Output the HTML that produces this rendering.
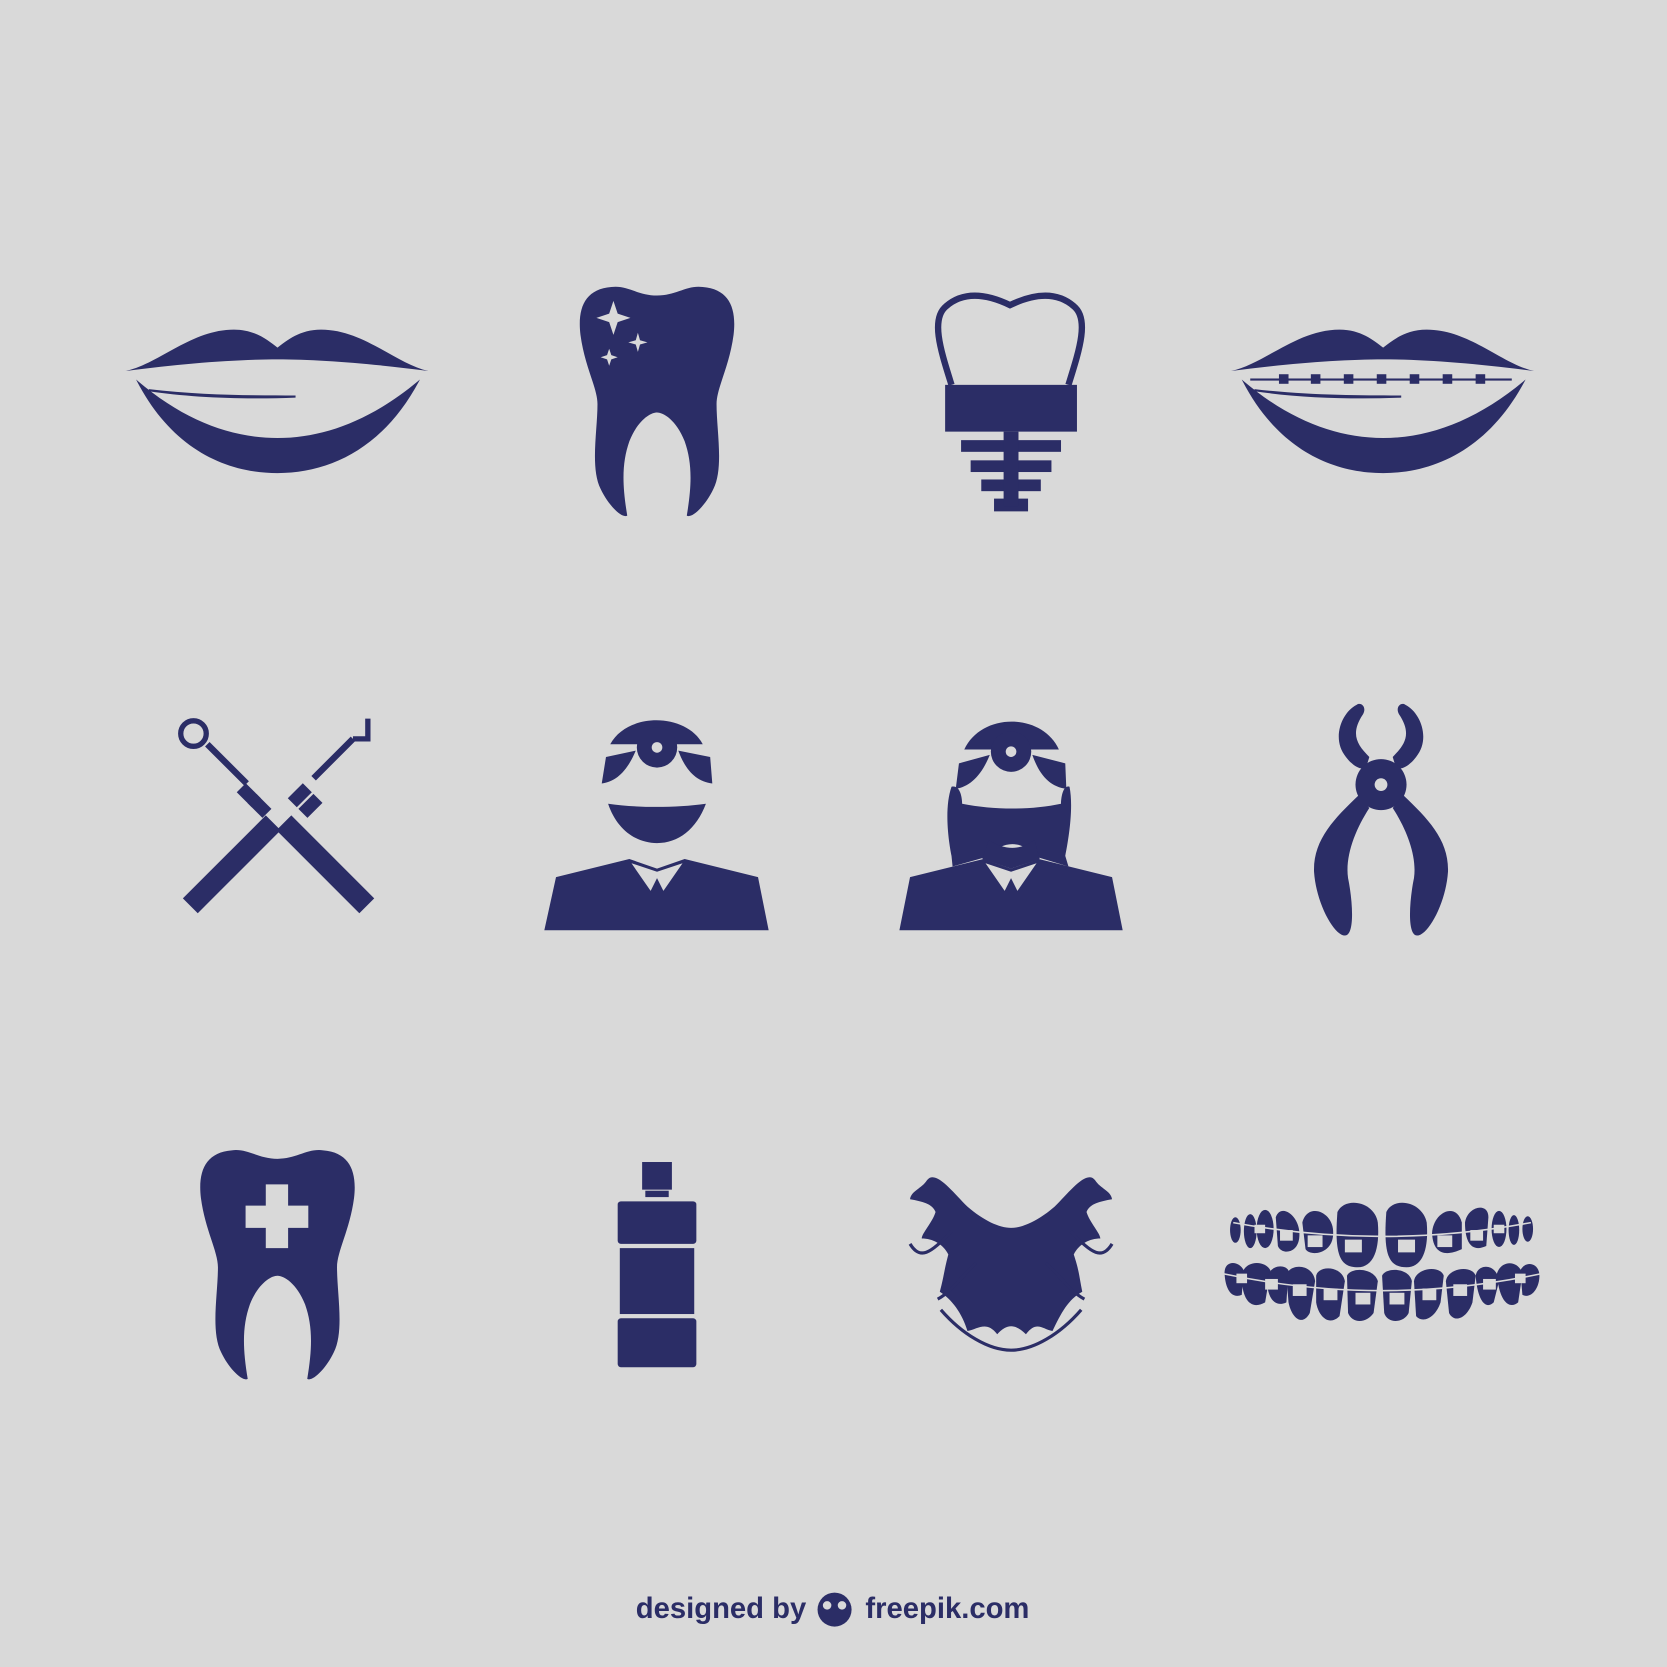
<!DOCTYPE html>
<html><head><meta charset="utf-8"><style>
html,body{margin:0;padding:0;background:#d9d9d9;}
svg{display:block;width:1667px;height:1667px;}
</style></head><body>
<svg viewBox="0 0 1568 1568" xmlns="http://www.w3.org/2000/svg">
<rect width="1568" height="1568" fill="#d9d9d9"/>
<defs>
<g id="lips">
<path d="M118 349 C150 342 180 310 220 310 C240 310 252 320 261 327 C270 320 282 310 302 310 C342 310 372 342 403 349 C350 342 300 338 261 338 C222 338 170 342 118 349Z"/>
<path d="M128 357 C160 420 210 445 261 445 C312 445 362 420 395 357 C350 395 305 412 261 412 C217 412 172 395 128 357Z"/>
<path d="M140 366 C190 372 240 372 278 372 L278 374 C230 376 180 374 140 368Z"/>
</g>
<path id="tooth" d="M618 278 C600 278 590 268 575 270 C550 272 543 290 546 315 C550 345 562 365 562 380 C562 405 555 440 565 460 C572 475 585 488 590 485 C585 455 585 435 592 415 C600 395 612 388 618 388 C624 388 636 395 644 415 C651 435 651 455 646 485 C651 488 664 475 671 460 C681 440 674 405 674 380 C674 365 686 345 690 315 C693 290 686 272 661 270 C646 268 636 278 618 278Z"/>
</defs>
<g fill="#2b2d66">
<use href="#lips"/>
<use href="#tooth"/>
<g fill="#d9d9d9">
<path d="M577 283 L581 295 L593 299 L581 303 L577 315 L573 303 L561 299 L573 295Z"/>
<path d="M600 313 L602 320 L609 322 L602 324 L600 331 L598 324 L591 322 L598 320Z"/>
<path d="M573 328 L575 334 L581 336 L575 338 L573 344 L571 338 L565 336 L571 334Z"/>
</g>
<path d="M895 362 C885 330 875 300 890 288 C905 275 925 275 950 287 C975 275 995 275 1010 288 C1025 300 1015 330 1005 362" fill="none" stroke="#2b2d66" stroke-width="6"/>
<rect x="889" y="362" width="124" height="44"/>
<rect x="904" y="414" width="94" height="11"/>
<rect x="913" y="433" width="76" height="11"/>
<rect x="923" y="451" width="56" height="11"/>
<rect x="935" y="469" width="32" height="12"/>
<rect x="944" y="406" width="14" height="70"/>
<use href="#lips" transform="translate(1040,0)"/>
<rect x="1176" y="356" width="246" height="2"/>
<g><rect x="1203" y="352" width="9" height="9"/><rect x="1233" y="352" width="9" height="9"/><rect x="1264" y="352" width="9" height="9"/><rect x="1295" y="352" width="9" height="9"/><rect x="1326" y="352" width="9" height="9"/><rect x="1357" y="352" width="9" height="9"/><rect x="1388" y="352" width="9" height="9"/></g>
<path d="M172 845 L250 767 L264 781 L186 859Z"/>
<path d="M352 845 L274 767 L260 781 L338 859Z"/>
<rect x="228" y="738" width="12" height="20" transform="rotate(-45 234 748)"/>
<rect x="238" y="748" width="12" height="20" transform="rotate(-45 244 758)"/>
<rect x="276" y="738" width="12" height="20" transform="rotate(45 282 748)"/>
<rect x="286" y="748" width="12" height="20" transform="rotate(45 292 758)"/>
<path d="M195 700 L232 737 M332 695 L295 732" stroke="#2b2d66" stroke-width="6"/>
<circle cx="182" cy="690" r="12" fill="none" stroke="#2b2d66" stroke-width="5"/>
<path d="M332 695 L346 695 L346 676" fill="none" stroke="#2b2d66" stroke-width="5"/>
<path d="M574 700 C590 670 645 670 661 700 Z"/>
<circle cx="618" cy="703" r="19"/><circle cx="618" cy="703" r="5" fill="#d9d9d9"/>
<path d="M570 712 L598 706 C590 725 580 735 566 737Z M638 706 L668 712 L670 737 C655 735 645 725 638 706Z"/>
<path d="M572 756 C600 760 635 760 664 756 C655 780 638 793 618 793 C598 793 580 780 572 756Z"/>
<path d="M523 825 L592 808 L618 817 L644 808 L713 825 L723 875 L512 875Z"/>
<path d="M594 812 L612 838 L618 826 L624 838 L642 812 L618 820Z" fill="#d9d9d9"/>
<path d="M907 705 C923 670 980 670 996 705 Z"/>
<circle cx="951" cy="707" r="19"/><circle cx="951" cy="707" r="5" fill="#d9d9d9"/>
<path d="M902 718 L931 710 C923 730 912 740 899 742Z M971 710 L1002 718 L1003 742 C988 740 978 730 971 710Z"/>
<path d="M895 740 C903 738 905 750 905 756 C935 762 970 762 998 756 C998 750 1000 738 1006 740 C1010 760 1005 790 1002 805 L1005 815 L975 806 C960 790 945 790 928 806 L896 815 L895 805 C892 790 888 760 895 740Z"/>
<path d="M930 790 C945 800 960 800 973 790 L978 808 L951 817 L924 808Z"/>
<path d="M856 825 L925 808 L951 817 L977 808 L1046 825 L1056 875 L846 875Z"/>
<path d="M927 812 L945 838 L951 826 L957 838 L975 812 L951 820Z" fill="#d9d9d9"/>
<path d="M1276 663 C1262 670 1252 695 1266 712 C1272 720 1280 725 1285 722 L1288 712 C1276 700 1270 690 1282 672 C1286 665 1280 660 1276 663Z"/>
<path d="M1322 663 C1336 670 1346 695 1332 712 C1326 720 1318 725 1313 722 L1310 712 C1322 700 1328 690 1316 672 C1312 665 1318 660 1322 663Z"/>
<circle cx="1299" cy="738" r="24"/><circle cx="1299" cy="738" r="6" fill="#d9d9d9"/>
<path d="M1278 748 C1255 770 1235 790 1236 820 C1238 850 1255 880 1265 880 C1275 880 1272 845 1268 826 C1265 805 1275 780 1288 760Z"/>
<path d="M1320 748 C1343 770 1363 790 1362 820 C1360 850 1343 880 1333 880 C1323 880 1326 845 1330 826 C1333 805 1323 780 1310 760Z"/>
<use href="#tooth" transform="translate(-357,812)"/>
<path d="M250 1114 H271 V1134 H290 V1155 H271 V1174 H250 V1155 H231 V1134 H250Z" fill="#d9d9d9"/>
<rect x="604" y="1093" width="28" height="26"/>
<rect x="607" y="1120" width="22" height="6"/>
<rect x="581" y="1130" width="74" height="40" rx="3"/>
<rect x="583" y="1174" width="70" height="62"/>
<rect x="581" y="1240" width="74" height="46" rx="3"/>
<path d="M872 1110 C880 1100 895 1120 910 1135 C925 1148 940 1155 951 1155 C962 1155 977 1148 992 1135 C1007 1120 1022 1100 1030 1110 C1035 1118 1045 1120 1046 1128 C1035 1130 1025 1132 1022 1140 C1025 1150 1035 1160 1035 1165 C1025 1165 1015 1170 1010 1180 C1015 1195 1015 1200 1018 1215 C1005 1222 998 1235 990 1252 C980 1250 975 1242 965 1255 C955 1245 947 1245 938 1255 C928 1242 920 1250 910 1252 C905 1235 895 1222 884 1215 C888 1200 888 1195 892 1180 C887 1170 877 1165 867 1165 C867 1160 877 1150 880 1140 C877 1132 867 1130 856 1128 C857 1120 867 1118 872 1110Z"/>
<path d="M885 1232 C905 1255 930 1270 951 1270 C972 1270 997 1255 1017 1232" fill="none" stroke="#2b2d66" stroke-width="3"/>
<path d="M856 1170 C865 1185 875 1180 895 1158 M1046 1170 C1037 1185 1027 1180 1007 1158 M882 1222 C895 1215 905 1200 918 1188 M1020 1222 C1007 1215 997 1200 984 1188" fill="none" stroke="#2b2d66" stroke-width="3"/>
<g>
<ellipse cx="1162" cy="1157" rx="5" ry="12"/><ellipse cx="1176" cy="1158" rx="6" ry="16"/><ellipse cx="1190" cy="1156" rx="8" ry="18"/>
<path d="M1200 1145 C1205 1130 1225 1145 1222 1165 C1220 1180 1205 1180 1202 1172Z"/>
<path d="M1225 1150 C1230 1130 1255 1140 1254 1160 C1254 1180 1232 1182 1228 1175Z"/>
<path d="M1258 1140 C1265 1125 1293 1130 1296 1150 C1298 1175 1292 1192 1277 1192 C1260 1192 1255 1180 1258 1140Z"/>
<path d="M1304 1140 C1311 1125 1338 1130 1342 1150 C1344 1175 1338 1192 1323 1192 C1306 1192 1301 1180 1304 1140Z"/>
<path d="M1347 1160 C1348 1140 1370 1130 1375 1150 L1375 1175 C1360 1182 1348 1180 1347 1160Z"/>
<path d="M1378 1150 C1380 1135 1400 1130 1400 1145 L1398 1172 C1385 1178 1378 1170 1378 1150Z"/>
<ellipse cx="1410" cy="1156" rx="7" ry="17"/><ellipse cx="1424" cy="1157" rx="5" ry="14"/><ellipse cx="1437" cy="1156" rx="5" ry="12"/>
<path d="M1152 1200 C1150 1185 1165 1185 1170 1195 L1168 1218 C1158 1222 1153 1212 1152 1200Z"/>
<path d="M1168 1200 C1170 1185 1190 1185 1195 1195 L1190 1225 C1178 1232 1168 1225 1168 1200Z"/>
<path d="M1192 1205 C1192 1190 1208 1188 1212 1195 L1210 1225 C1200 1230 1192 1222 1192 1205Z"/>
<path d="M1210 1200 C1212 1188 1235 1188 1237 1205 L1232 1235 C1225 1248 1215 1240 1212 1225Z"/>
<path d="M1238 1200 C1240 1190 1262 1190 1265 1205 L1260 1238 C1250 1248 1240 1238 1238 1225Z"/>
<path d="M1267 1200 C1270 1192 1292 1192 1296 1205 L1292 1235 C1285 1245 1272 1245 1268 1235Z"/>
<path d="M1300 1200 C1303 1192 1325 1192 1328 1205 L1325 1235 C1320 1245 1305 1245 1302 1235Z"/>
<path d="M1330 1205 C1332 1192 1355 1190 1358 1200 L1355 1225 C1350 1240 1338 1245 1332 1238Z"/>
<path d="M1360 1205 C1362 1192 1385 1190 1388 1200 L1385 1225 C1380 1240 1368 1245 1363 1235Z"/>
<path d="M1388 1200 C1390 1188 1408 1188 1410 1205 L1405 1225 C1398 1232 1390 1225 1388 1200Z"/>
<path d="M1408 1198 C1412 1185 1428 1185 1432 1198 L1428 1225 C1420 1232 1410 1225 1408 1198Z"/>
<path d="M1430 1195 C1435 1185 1448 1188 1448 1200 C1448 1212 1440 1222 1432 1218Z"/>
</g>
<g stroke="#d9d9d9" stroke-width="1.5" fill="none"><path d="M1160 1150 Q1300 1176 1440 1150"/><path d="M1150 1198 Q1300 1230 1450 1198"/></g>
<g fill="#d9d9d9">
<rect x="1265" y="1166" width="16" height="12"/><rect x="1315" y="1166" width="16" height="12"/>
<rect x="1230" y="1162" width="14" height="11"/><rect x="1204" y="1157" width="12" height="10"/><rect x="1352" y="1162" width="14" height="11"/><rect x="1383" y="1157" width="12" height="10"/>
<rect x="1180" y="1152" width="10" height="8"/><rect x="1405" y="1152" width="10" height="8"/>
<rect x="1275" y="1216" width="14" height="11"/><rect x="1307" y="1216" width="14" height="11"/><rect x="1245" y="1212" width="13" height="11"/><rect x="1338" y="1212" width="13" height="11"/>
<rect x="1216" y="1208" width="13" height="11"/><rect x="1367" y="1208" width="13" height="11"/><rect x="1190" y="1203" width="12" height="10"/><rect x="1395" y="1203" width="12" height="10"/>
<rect x="1163" y="1198" width="10" height="9"/><rect x="1425" y="1198" width="10" height="9"/>
</g>
</g>
<text x="598" y="1522" font-family="Liberation Sans, sans-serif" font-weight="bold" font-size="27.5" fill="#2b2d66">designed by</text>
<circle cx="785" cy="1514" r="16" fill="#2b2d66"/>
<circle cx="778" cy="1510" r="4" fill="#d9d9d9"/><circle cx="792" cy="1510" r="4" fill="#d9d9d9"/>
<text x="814" y="1522" font-family="Liberation Sans, sans-serif" font-weight="bold" font-size="27.5" fill="#2b2d66">freepik.com</text>
</svg>
</body></html>
